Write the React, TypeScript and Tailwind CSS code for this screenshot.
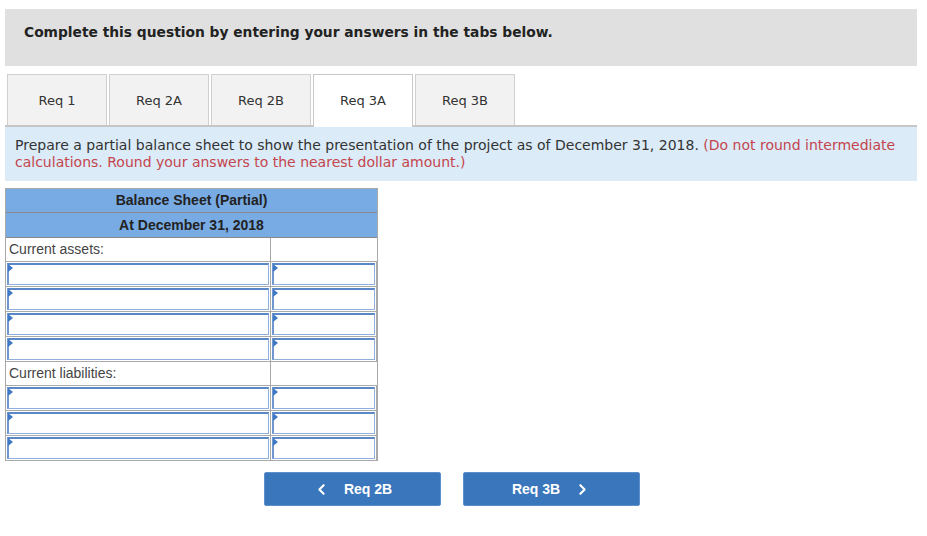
import { ChevronLeft, ChevronRight } from 'lucide-react'

const tabs = ['Req 1', 'Req 2A', 'Req 2B', 'Req 3A', 'Req 3B']

function InputCell({ wide }: { wide?: boolean }) {
  return (
    <div
      className={`relative h-full border-r border-[#a9a9a9] p-px ${wide ? 'w-[265px]' : 'flex-1'}`}
    >
      <div className="h-full border border-[#8fb0dc] border-t-2 border-t-[#5a87c6] border-l-2 border-l-[#6f98d0] bg-white" />
      <span className="absolute left-[2px] top-[2px] h-0 w-0 border-y-[4px] border-l-[5px] border-y-transparent border-l-[#3f78c4]" />
    </div>
  )
}

function LabelRow({ label }: { label: string }) {
  return (
    <div className="flex h-[24px] border-b border-[#a9a9a9] bg-white">
      <div className="flex w-[265px] items-center border-r border-[#a9a9a9] pl-[3px] text-[14px] text-[#444]">
        {label}
      </div>
      <div className="flex-1" />
    </div>
  )
}

function InputRow() {
  return (
    <div className="flex h-[25px] border-b border-[#a9a9a9]">
      <InputCell wide />
      <InputCell />
    </div>
  )
}

export default function App() {
  return (
    <div className="relative h-[536px] w-[927px] overflow-hidden bg-white pt-[9px] font-['DejaVu_Sans',sans-serif] text-[#333]">
      <div className="ml-[5px] h-[57px] w-[912px] bg-[#e0e0e0] px-[19px] pt-[13px] text-[13.8px] font-bold leading-[20px] text-[#222]">
        Complete this question by entering your answers in the tabs below.
      </div>

      <div className="ml-[7px] mt-[8px] flex h-[51px] items-end gap-[2px]">
        {tabs.map((t) => {
          const active = t === 'Req 3A'
          return (
            <div
              key={t}
              className={`flex w-[100px] items-center justify-center border border-b-0 pt-[2px] text-[13px] text-[#333] ${
                active
                  ? 'relative z-10 -mb-[2px] h-[53px] border-[#c8c8c8] bg-white pb-[2px]'
                  : 'h-[51px] border-[#d0d0d0] bg-[#f2f2f2]'
              }`}
            >
              {t}
            </div>
          )
        })}
      </div>

      <div className="ml-[5px] h-[56px] w-[912px] border-t-2 border-[#c6c6c6] bg-[#dbebf8] px-[10px] pt-[10px] text-[14px] leading-[17px] text-[#333]">
        Prepare a partial balance sheet to show the presentation of the project as of December 31, 2018.{' '}
        <span className="text-[#c4454d]">
          (Do not round intermediate calculations. Round your answers to the nearest dollar amount.)
        </span>
      </div>

      <div className="ml-[5px] mt-[7px] w-[373px] border-x border-t border-[#a9a9a9] font-['Liberation_Sans',Arial,sans-serif]">
        <div className="flex h-[24px] items-center justify-center border-b border-[#8a8a8a] bg-[#78abe3] text-[14px] font-bold text-[#222]">
          Balance Sheet (Partial)
        </div>
        <div className="flex h-[25px] items-center justify-center border-b border-[#8a8a8a] bg-[#78abe3] text-[14px] font-bold text-[#222]">
          At December 31, 2018
        </div>
        <LabelRow label="Current assets:" />
        <InputRow />
        <InputRow />
        <InputRow />
        <InputRow />
        <LabelRow label="Current liabilities:" />
        <InputRow />
        <InputRow />
        <InputRow />
      </div>

      <div className="ml-[264px] mt-[11px] flex gap-[22px] font-['Liberation_Sans',Arial,sans-serif]">
        <button className="flex h-[34px] w-[177px] items-center justify-center gap-[14px] rounded-[2px] border border-[#5d8fcb] bg-[#3a76bb] text-[14px] font-bold text-white">
          <ChevronLeft size={17} strokeWidth={3} />
          <span>Req 2B</span>
        </button>
        <button className="flex h-[34px] w-[177px] items-center justify-center gap-[14px] rounded-[2px] border border-[#5d8fcb] bg-[#3a76bb] text-[14px] font-bold text-white">
          <span>Req 3B</span>
          <ChevronRight size={17} strokeWidth={3} />
        </button>
      </div>
    </div>
  )
}
